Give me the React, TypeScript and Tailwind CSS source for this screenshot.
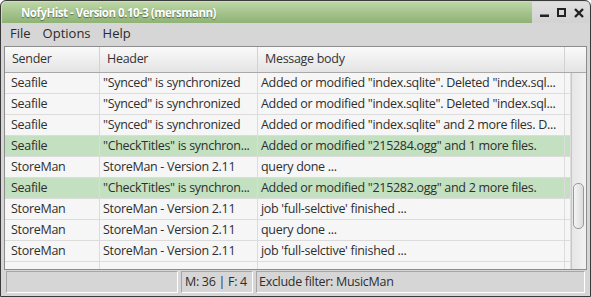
import { ReactNode } from 'react'

const ROWS = [
  { sender: 'Seafile', header: '"Synced" is synchronized', body: 'Added or modified "index.sqlite". Deleted "index.sql...', hl: false },
  { sender: 'Seafile', header: '"Synced" is synchronized', body: 'Added or modified "index.sqlite". Deleted "index.sql...', hl: false },
  { sender: 'Seafile', header: '"Synced" is synchronized', body: 'Added or modified "index.sqlite" and 2 more files. D...', hl: false },
  { sender: 'Seafile', header: '"CheckTitles" is synchron...', body: 'Added or modified "215284.ogg" and 1 more files.', hl: true },
  { sender: 'StoreMan', header: 'StoreMan - Version 2.11', body: 'query done ...', hl: false },
  { sender: 'Seafile', header: '"CheckTitles" is synchron...', body: 'Added or modified "215282.ogg" and 2 more files.', hl: true },
  { sender: 'StoreMan', header: 'StoreMan - Version 2.11', body: "job 'full-selctive' finished ...", hl: false },
  { sender: 'StoreMan', header: 'StoreMan - Version 2.11', body: 'query done ...', hl: false },
  { sender: 'StoreMan', header: 'StoreMan - Version 2.11', body: "job 'full-selctive' finished ...", hl: false },
  { sender: '', header: '', body: '', hl: false },
]

function Cell({ w, pl, children }: { w: string; pl: string; children: ReactNode }) {
  return (
    <div className={`${w} ${pl} shrink-0 h-full flex items-center overflow-hidden whitespace-nowrap border-r border-[#dcdcdc]`}>
      {children}
    </div>
  )
}

function HeadCell({ w, children }: { w: string; children?: ReactNode }) {
  return (
    <div className={`${w} shrink-0 h-full flex items-center pl-[7px] border-r border-[#d2d2d2] whitespace-nowrap`}>
      {children}
    </div>
  )
}

export default function App() {
  return (
    <div
      className="w-[591px] h-[297px] overflow-hidden bg-[#d6d6d6] border border-[#3a3a3a] rounded-t-[6px] flex flex-col text-[12.5px] tracking-[-0.3px] text-[#2e2e2e]"
      style={{ fontFamily: '"Open Sans", "Noto Sans", sans-serif' }}
    >
      {/* title bar */}
      <div className="h-[22px] flex shrink-0 pt-[1px] px-[1px]">
        <div className="flex-1 rounded-tl-[5px] bg-gradient-to-b from-[#bcd6a6] to-[#8fb275] flex items-center pl-[19px] text-white font-bold text-[11.5px] tracking-[-0.5px] [text-shadow:0_1px_1px_rgba(0,0,0,0.45)]">
          NofyHist - Version 0.10-3 (mersmann)
        </div>
        <div className="w-[57px] bg-gradient-to-b from-[#e0e0e0] to-[#d2d2d2] flex items-center gap-[8px] pl-[8px] text-[#222]">
          <svg width="9" height="9" viewBox="0 0 9 9"><rect x="0" y="6.5" width="9" height="2.5" fill="currentColor" /></svg>
          <svg width="9" height="9" viewBox="0 0 9 9"><rect x="1" y="1" width="7" height="7" fill="none" stroke="currentColor" strokeWidth="2" /></svg>
          <svg width="10" height="10" viewBox="0 0 10 10"><path d="M1 1L9 9M9 1L1 9" stroke="currentColor" strokeWidth="2.4" /></svg>
        </div>
      </div>

      {/* menu bar */}
      <div className="h-[22px] shrink-0 flex items-center gap-[12px] pl-[9px] text-[13px] tracking-normal text-[#2a2a2a]">
        <span>File</span>
        <span>Options</span>
        <span>Help</span>
      </div>

      {/* table */}
      <div className="h-[224px] shrink-0 mt-[1px] mx-[3px] border border-[#8c8c8c] bg-[#f6f6f6] flex flex-col overflow-hidden">
        <div className="h-[26px] shrink-0 flex bg-gradient-to-b from-[#fafafa] to-[#e4e4e4] border-b border-[#a9a9a9] text-[#333]">
          <HeadCell w="w-[95px]">Sender</HeadCell>
          <HeadCell w="w-[158px]">Header</HeadCell>
          <HeadCell w="w-[307px]">Message body</HeadCell>
          <div className="flex-1" />
        </div>
        <div className="flex-1 flex min-h-0">
          <div className="w-[566px] shrink-0 flex flex-col overflow-hidden">
            {ROWS.map((r, i) => (
              <div
                key={i}
                className={`h-[21px] shrink-0 flex border-b border-[#dcdcdc] ${r.hl ? 'bg-[#c3e1c0]' : 'bg-[#f6f6f6]'}`}
              >
                <Cell w="w-[95px]" pl="pl-[6px]">{r.sender}</Cell>
                <Cell w="w-[158px]" pl="pl-[3px]">{r.header}</Cell>
                <Cell w="w-[307px]" pl="pl-[3px]">{r.body}</Cell>
                <div className="flex-1 border-r border-[#dcdcdc]" />
              </div>
            ))}
          </div>
          <div className="flex-1 bg-gradient-to-r from-[#e6e6e6] to-[#f2f2f2] border-l border-[#c8c8c8] pt-[110px] pl-[1px]">
            <div className="w-[11px] h-[46px] rounded-[5px] border border-[#9a9a9a] bg-gradient-to-r from-[#f4f4f4] to-[#dcdcdc]" />
          </div>
        </div>
      </div>

      {/* status bar */}
      <div className="flex gap-[3px] px-[5px] mt-[1px] h-[22px] shrink-0">
        <div className="w-[172px] border border-[#a6a6a6] border-b-white border-r-white" />
        <div className="w-[72px] border border-[#a6a6a6] border-b-white border-r-white flex items-center pl-[3px] whitespace-nowrap">
          M: 36 | F: 4
        </div>
        <div className="flex-1 border border-[#a6a6a6] border-b-white border-r-white flex items-center pl-[2px] whitespace-nowrap">
          Exclude filter: MusicMan
        </div>
      </div>
    </div>
  )
}
